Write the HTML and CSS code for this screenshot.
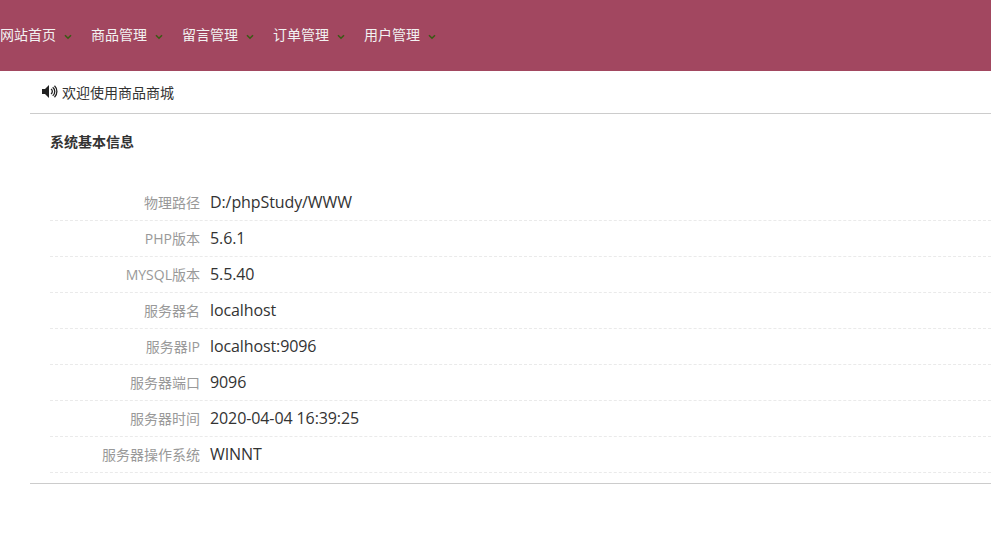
FILE: index.html
```html
<!DOCTYPE html>
<html lang="zh-CN">
<head>
<meta charset="utf-8">
<title>系统基本信息</title>
<link rel="stylesheet" href="styles.css">
</head>
<body>
<header class="nav">
  <a class="nav-item">网站首页<svg class="chev" viewBox="0 0 8 6"><path d="M1 1.200 4 4.200 7 1.200" fill="none" stroke="#3a5a14" stroke-width="1.600"/></svg></a>
  <a class="nav-item">商品管理<svg class="chev" viewBox="0 0 8 6"><path d="M1 1.200 4 4.200 7 1.200" fill="none" stroke="#3a5a14" stroke-width="1.600"/></svg></a>
  <a class="nav-item">留言管理<svg class="chev" viewBox="0 0 8 6"><path d="M1 1.200 4 4.200 7 1.200" fill="none" stroke="#3a5a14" stroke-width="1.600"/></svg></a>
  <a class="nav-item">订单管理<svg class="chev" viewBox="0 0 8 6"><path d="M1 1.200 4 4.200 7 1.200" fill="none" stroke="#3a5a14" stroke-width="1.600"/></svg></a>
  <a class="nav-item">用户管理<svg class="chev" viewBox="0 0 8 6"><path d="M1 1.200 4 4.200 7 1.200" fill="none" stroke="#3a5a14" stroke-width="1.600"/></svg></a>
</header>
<main class="content">
  <div class="notice">
    <svg class="speaker" viewBox="0 0 16 13"><path d="M0 4h3l4-4v13L3 9H0z" fill="#222"/><path d="M9 4a3 3 0 0 1 0 5M10.700 2.200a5.500 5.500 0 0 1 0 8.600M12.500.800a8 8 0 0 1 0 11.400" fill="none" stroke="#222" stroke-width="1.300"/></svg>
    <span>欢迎使用商品商城</span>
  </div>
  <section class="panel">
    <h2 class="title">系统基本信息</h2>
    <dl class="info">
      <div class="row"><dt>物理路径</dt><dd>D:/phpStudy/WWW</dd></div>
      <div class="row"><dt>PHP版本</dt><dd>5.6.1</dd></div>
      <div class="row"><dt>MYSQL版本</dt><dd>5.5.40</dd></div>
      <div class="row"><dt>服务器名</dt><dd>localhost</dd></div>
      <div class="row"><dt>服务器IP</dt><dd>localhost:9096</dd></div>
      <div class="row"><dt>服务器端口</dt><dd>9096</dd></div>
      <div class="row"><dt>服务器时间</dt><dd>2020-04-04 16:39:25</dd></div>
      <div class="row"><dt>服务器操作系统</dt><dd>WINNT</dd></div>
    </dl>
  </section>
</main>
</body>
</html>
```
FILE: styles.css
```css
* { box-sizing: border-box; }
html, body { margin: 0; padding: 0; }
body {
  background: #fff;
  color: #333;
  font-family: "Open Sans", "Noto Sans CJK SC", sans-serif;
  font-size: 14px;
  overflow: hidden;
}
.nav {
  display: flex;
  align-items: center;
  height: 71px;
  padding-bottom: 2px;
  background: #a24760;
}
.nav-item {
  display: flex;
  align-items: center;
  width: 91px;
  color: #f2f2f2;
  font-size: 14px;
  line-height: 20px;
}
.chev { width: 8px; height: 6px; margin-left: 8px; margin-top: 4px; }
.content { margin-left: 30px; }
.notice {
  display: flex;
  align-items: center;
  height: 43px;
  padding-left: 12px;
  border-bottom: 1px solid #ccc;
  color: #333;
}
.speaker { width: 16px; height: 13px; margin-right: 4px; margin-bottom: 2px; }
.panel {
  padding: 0 0 10px 20px;
  border-bottom: 1px solid #ccc;
}
.title {
  margin: 0;
  padding-top: 18px;
  height: 71px;
  font-size: 14px;
  line-height: 20px;
  font-weight: bold;
  color: #333;
}
.info { margin: 0; }
.row {
  display: flex;
  align-items: center;
  height: 36px;
  padding-bottom: 2px;
  border-bottom: 1px dashed #eaeaea;
}
.row dt {
  width: 150px;
  text-align: right;
  color: #999;
  font-size: 14px;
}
.row dd {
  margin: 0 0 0 10px;
  color: #333;
  font-size: 16px;
  letter-spacing: -0.1px;
}
```
